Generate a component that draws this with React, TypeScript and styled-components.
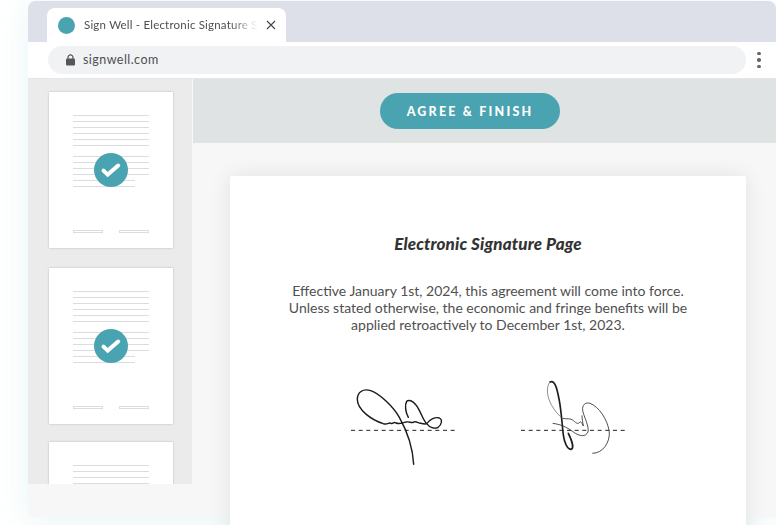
import React from "react";
import styled, { createGlobalStyle } from "styled-components";

const Global = createGlobalStyle`
  html, body { margin: 0; padding: 0; background: #fff; }
  body { font-family: "Lato", "Liberation Sans", sans-serif; }
`;

const Page = styled.div`
  width: 776px;
  height: 525px;
  overflow: hidden;
  padding: 1px 0 0 28px;
  box-sizing: border-box;
  background: #fff;
`;

const Window = styled.div`
  width: 748px;
  height: 516px;
  display: flex;
  flex-direction: column;
  background: #f7f7f7;
  border-radius: 8px 8px 3px 3px;
  box-shadow: 0 4px 32px rgba(120, 190, 200, 0.16);
`;

const TabStrip = styled.div`
  height: 41px;
  flex: none;
  display: flex;
  align-items: flex-end;
  padding-left: 19px;
  background: #dde0e8;
  border-radius: 8px 8px 0 0;
`;

const Tab = styled.div`
  width: 239px;
  height: 34px;
  box-sizing: border-box;
  display: flex;
  align-items: center;
  padding: 0 12px 0 11px;
  background: #fff;
  border-radius: 8px 8px 0 0;
`;

const Favicon = styled.span`
  width: 17px;
  height: 17px;
  flex: none;
  border-radius: 50%;
  background: #4aa3b0;
`;

const TabTitle = styled.span`
  width: 174px;
  flex: none;
  margin: 0 0 2px 9px;
  font-size: 11.5px;
  letter-spacing: 0.2px;
  color: #4d4f53;
  white-space: nowrap;
  overflow: hidden;
  -webkit-mask-image: linear-gradient(to right, #000 84%, transparent 100%);
  mask-image: linear-gradient(to right, #000 84%, transparent 100%);
`;

const CloseIcon = styled.svg`
  width: 10px;
  height: 10px;
  margin-left: 8px;
  flex: none;
`;

const Toolbar = styled.div`
  height: 37px;
  flex: none;
  box-sizing: border-box;
  display: flex;
  align-items: center;
  padding: 0 14px 0 20px;
  gap: 10px;
  background: #fff;
  border-bottom: 1px solid #e6e6e8;
`;

const UrlPill = styled.div`
  width: 698px;
  height: 28px;
  display: flex;
  align-items: center;
  padding-left: 18px;
  box-sizing: border-box;
  gap: 8px;
  border-radius: 14px;
  background: #f1f2f4;
`;

const UrlText = styled.span`
  margin-bottom: 2px;
  font-size: 12.5px;
  letter-spacing: 0.45px;
  color: #4d4f53;
`;

const Dots = styled.div`
  display: flex;
  flex-direction: column;
  gap: 3px;
  margin-left: 1px;
`;

const Dot = styled.span`
  width: 3.5px;
  height: 3.5px;
  border-radius: 50%;
  background: #666;
`;

const Content = styled.div`
  flex: 1;
  min-height: 0;
  display: flex;
  align-items: flex-start;
`;

const Sidebar = styled.aside`
  width: 164px;
  height: 405px;
  flex: none;
  overflow: hidden;
  box-sizing: border-box;
  padding: 13px 0 0 21px;
  margin-right: 1px;
  background: #ebebeb;
`;

const Thumb = styled.div<{ $gap: number }>`
  position: relative;
  width: 124px;
  height: 156px;
  flex: none;
  box-sizing: border-box;
  margin-bottom: ${(p) => p.$gap}px;
  padding: 23px 24px 15px;
  display: flex;
  flex-direction: column;
  background: #fff;
  box-shadow: 0 0 2px rgba(0, 0, 0, 0.22);
`;

const LineGroup = styled.div`
  display: flex;
  flex-direction: column;
  gap: 5px;
  margin-bottom: 10px;
`;

const Line = styled.span<{ $short?: boolean }>`
  display: block;
  height: 1px;
  width: ${(p) => (p.$short ? 62 : 76)}px;
  background: #dcdcdc;
`;

const ThumbFooter = styled.div`
  margin-top: auto;
  display: flex;
  justify-content: space-between;
`;

const SignBox = styled.span`
  width: 30px;
  height: 3px;
  box-sizing: border-box;
  border: 1px solid #dcdcdc;
`;

const CheckBadge = styled.span`
  position: absolute;
  left: 45px;
  top: 61px;
  width: 34px;
  height: 34px;
  display: flex;
  border-radius: 50%;
  background: #4aa3b0;
`;

const Main = styled.main`
  flex: 1;
  min-width: 0;
  display: flex;
  flex-direction: column;
`;

const Banner = styled.div`
  height: 64px;
  display: flex;
  align-items: center;
  justify-content: center;
  padding-right: 29px;
  background: #e0e3e3;
`;

const AgreeButton = styled.button`
  width: 180px;
  height: 36px;
  border: 0;
  padding: 0;
  border-radius: 18px;
  background: #4aa3b0;
  color: #fff;
  font-family: inherit;
  font-size: 12.5px;
  font-weight: 900;
  letter-spacing: 2.2px;
`;

const Card = styled.section`
  width: 516px;
  height: 420px;
  flex: none;
  box-sizing: border-box;
  margin: 33px 0 0 37px;
  padding-top: 58px;
  background: #fff;
  border-radius: 2px;
  box-shadow: 0 0 22px rgba(0, 0, 0, 0.09);
  text-align: center;
`;

const CardTitle = styled.h1`
  margin: 0;
  font-size: 17px;
  line-height: 20px;
  letter-spacing: 0.15px;
  font-weight: 900;
  font-style: italic;
  color: #333;
`;

const CardBody = styled.p`
  margin: 28px 0 0;
  font-size: 14px;
  line-height: 17px;
  color: #505050;
`;

const Signatures = styled.div`
  display: flex;
  justify-content: center;
  gap: 20px;
  margin-top: 37px;
  padding-left: 4px;
`;

const Signature = styled.svg`
  width: 150px;
  height: 100px;
  flex: none;
`;

const Lock = () => (
  <svg width="9" height="12" viewBox="0 0 9 12" style={{ flex: "none" }}>
    <path d="M2 5V3.4a2.5 2.5 0 0 1 5 0V5" fill="none" stroke="#55575b" strokeWidth="1.2" />
    <rect x="0" y="4.6" width="9" height="7" rx="1" fill="#55575b" />
  </svg>
);

const BadgeIcon = () => (
  <CheckBadge>
    <svg width="34" height="34" viewBox="0 0 34 34">
      <path d="M9.5 17.6L13.7 21.6L24.2 12.6" fill="none" stroke="#fff" strokeWidth="4" strokeLinecap="round" strokeLinejoin="miter" />
    </svg>
  </CheckBadge>
);

const PageThumb = ({ gap, checked }: { gap: number; checked?: boolean }) => (
  <Thumb $gap={gap}>
    <LineGroup>
      {[0, 1, 2, 3, 4, 5].map((i) => (
        <Line key={i} />
      ))}
    </LineGroup>
    <LineGroup>
      {[0, 1, 2, 3, 4, 5].map((i) => (
        <Line key={i} $short={i > 3} />
      ))}
    </LineGroup>
    <ThumbFooter>
      <SignBox />
      <SignBox />
    </ThumbFooter>
    {checked && <BadgeIcon />}
  </Thumb>
);

const dashProps = {
  stroke: "#222",
  strokeWidth: 3,
  strokeDasharray: "12 11",
  fill: "none",
};

export default function App() {
  return (
    <Page>
      <Global />
      <Window>
        <TabStrip>
          <Tab>
            <Favicon />
            <TabTitle>Sign Well - Electronic Signature Software</TabTitle>
            <CloseIcon viewBox="0 0 10 10">
              <path d="M1 1L9 9M9 1L1 9" stroke="#444" strokeWidth="1.1" fill="none" />
            </CloseIcon>
          </Tab>
        </TabStrip>
        <Toolbar>
          <UrlPill>
            <Lock />
            <UrlText>signwell.com</UrlText>
          </UrlPill>
          <Dots>
            <Dot />
            <Dot />
            <Dot />
          </Dots>
        </Toolbar>
        <Content>
          <Sidebar>
            <PageThumb gap={20} checked />
            <PageThumb gap={18} checked />
            <PageThumb gap={0} />
          </Sidebar>
          <Main>
            <Banner>
              <AgreeButton>AGREE &amp; FINISH</AgreeButton>
            </Banner>
            <Card>
              <CardTitle>Electronic Signature Page</CardTitle>
              <CardBody>
                Effective January 1st, 2024, this agreement will come into force.
                <br />
                Unless stated otherwise, the economic and fringe benefits will be
                <br />
                applied retroactively to December 1st, 2023.
              </CardBody>
              <Signatures>
                <Signature viewBox="0 0 450 300">
                  <path d="M63 181H378" {...dashProps} />
                  <path
                    d="M251 283C249 245 238 195 208 142C190 110 150 72 122 62C98 54 82 68 82 88C82 120 125 150 160 161C172 164 176 158 180 159C186 165 190 154 198 159C208 163 216 160 228 156C238 154 244 160 250 157C256 151 262 158 272 160C280 162 286 163 290 161C278 150 272 122 258 105C248 92 236 88 230 94C224 104 226 126 235 142"
                    fill="none"
                    stroke="#1d1d1d"
                    strokeWidth="4.4"
                    strokeLinecap="round"
                  />
                  <path
                    d="M290 161C298 172 314 178 324 172C336 164 338 148 328 144C314 140 298 150 290 161"
                    fill="none"
                    stroke="#1d1d1d"
                    strokeWidth="4"
                  />
                </Signature>
                <Signature viewBox="0 0 450 300">
                  <path d="M63 181H378" {...dashProps} />
                  <path
                    d="M150 36C166 28 172 60 178 92C184 125 186 160 190 195C193 218 202 238 214 238C222 234 216 212 205 190"
                    fill="none"
                    stroke="#1d1d1d"
                    strokeWidth="5"
                    strokeLinecap="round"
                  />
                  <path
                    d="M150 36C138 50 140 80 155 106C164 122 176 136 188 146"
                    fill="none"
                    stroke="#555"
                    strokeWidth="2"
                  />
                  <path
                    d="M188 145C200 148 210 144 218 150C226 156 232 164 238 158C242 150 248 164 250 168C248 156 246 145 246 136"
                    fill="none"
                    stroke="#333"
                    strokeWidth="2.6"
                  />
                  <path
                    d="M158 160C190 164 206 176 226 190C240 198 256 202 264 186C268 170 252 140 248 122C246 104 256 96 270 100C296 110 322 146 328 186C330 218 308 250 277 250"
                    fill="none"
                    stroke="#333"
                    strokeWidth="2.6"
                  />
                </Signature>
              </Signatures>
            </Card>
          </Main>
        </Content>
      </Window>
    </Page>
  );
}
